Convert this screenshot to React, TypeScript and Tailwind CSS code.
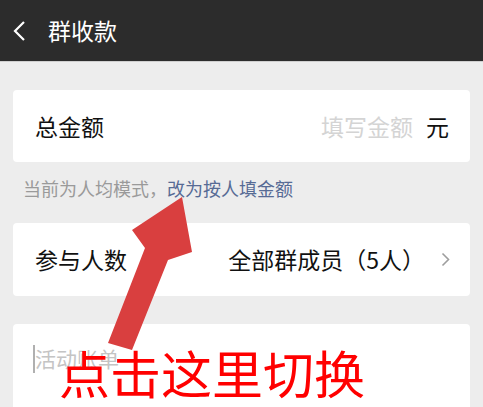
import React from 'react';

const FONT = { fontFamily: '"Noto Sans CJK SC", "Noto Sans", sans-serif' };

export default function App() {
  return (
    <div className="relative w-[483px] h-[407px] overflow-hidden bg-[#ededed]" style={FONT}>
      {/* Top bar */}
      <div className="h-[62px] bg-[#2c2c2c] border-b border-[#cfcfcf] flex items-center">
        <svg width="14" height="20" viewBox="0 0 14 20" className="ml-[12px]">
          <path d="M12 1 L3 10 L12 19" fill="none" stroke="#ffffff" strokeWidth="2.2" />
        </svg>
        <span className="ml-[22px] text-[23px] leading-none text-white">群收款</span>
      </div>

      <div className="pt-[28px] px-[13px]">
        {/* Total amount */}
        <div className="h-[72px] bg-white rounded-[4px] flex items-center pl-[22px] pr-[21px]">
          <span className="text-[23px] text-[#111]">总金额</span>
          <span className="ml-auto text-[23px] text-[#d4d4d4]">填写金额</span>
          <span className="ml-[13px] text-[23px] text-[#111]">元</span>
        </div>

        {/* Mode hint */}
        <div className="h-[61px] flex items-center pl-[10px] pb-[9px] text-[18px]">
          <span className="text-[#9a9a9a]">当前为人均模式，</span>
          <span className="text-[#576b95]">改为按人填金额</span>
        </div>

        {/* Participants */}
        <div className="h-[73px] bg-white rounded-[4px] flex items-center pl-[22px] pr-[20px]">
          <span className="text-[23px] text-[#111]">参与人数</span>
          <span className="ml-auto text-[23px] text-[#111]">全部群成员（5人）</span>
          <svg width="9" height="15" viewBox="0 0 9 15" className="ml-[16px]">
            <path d="M1.5 1.5 L7.5 7.5 L1.5 13.5" fill="none" stroke="#9e9e9e" strokeWidth="1.6" />
          </svg>
        </div>

        {/* Note */}
        <div className="mt-[28px] h-[150px] bg-white rounded-[4px] pt-[19px] pl-[20px]">
          <div className="flex items-center">
            <span className="w-[2px] h-[28px] bg-[#b0b0b0]" />
            <span className="text-[21px] text-[#c4c4c4]">活动账单</span>
          </div>
        </div>
      </div>

      {/* Annotation overlay */}
      <svg className="absolute left-0 top-0" width="483" height="407" viewBox="0 0 483 407">
        <polygon
          points="182,197 192,252 168,260 132,350 108,343 145,248 132,230"
          fill="#d93f3f"
        />
      </svg>
      <div className="absolute left-[59px] top-[347px] text-[51px] leading-none text-[#ff0000] whitespace-nowrap">
        点击这里切换
      </div>
    </div>
  );
}
